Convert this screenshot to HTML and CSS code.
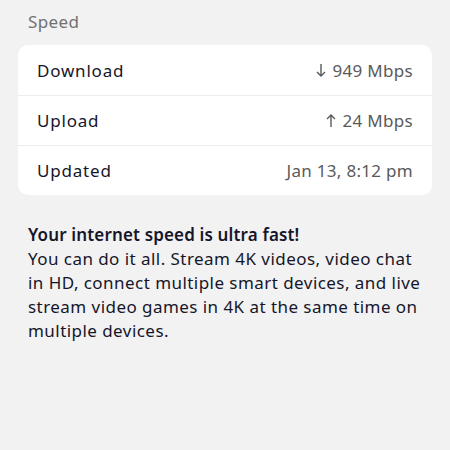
FILE: index.html
```html
<!DOCTYPE html>
<html lang="en">
<head>
  <meta charset="UTF-8">
  <meta name="viewport" content="width=device-width, initial-scale=1.0">
  <title>Speed</title>
  <link rel="stylesheet" href="styles.css">
</head>
<body>
  <div class="page">
    <div class="section-title">Speed</div>
    <div class="card">
      <div class="row">
        <span class="label">Download</span>
        <span class="value">
          <svg class="arrow" viewBox="0 0 10 14"><path d="M5 1V13M1 9L5 13L9 9"/></svg>
          949 Mbps
        </span>
      </div>
      <div class="row">
        <span class="label">Upload</span>
        <span class="value">
          <svg class="arrow" viewBox="0 0 10 14"><path d="M5 13V1M1 5L5 1L9 5"/></svg>
          24 Mbps
        </span>
      </div>
      <div class="row">
        <span class="label">Updated</span>
        <span class="value">Jan 13, 8:12 pm</span>
      </div>
    </div>

    <div class="info">
      <strong>Your internet speed is ultra fast!</strong>
      <p>You can do it all. Stream 4K videos, video chat in HD, connect multiple smart devices, and live stream video games in 4K at the same time on multiple devices.</p>
    </div>
  </div>
</body>
</html>
```

FILE: styles.css
```css
body {
  margin: 0;
  background-color: #f2f2f2;
  font-family: "Noto Sans", sans-serif;
  color: #16162a;
}

.page {
  padding: 10px 18px 0 18px;
}

.section-title {
  padding-left: 10px;
  font-size: 17px;
  letter-spacing: 0.4px;
  line-height: 24px;
  color: #717171;
  margin-bottom: 11px;
}

.card {
  background: white;
  border-radius: 10px;
  display: flex;
  flex-direction: column;
}

.row {
  height: 50px;
  display: flex;
  justify-content: space-between;
  align-items: center;
  padding: 0 19px;
  font-size: 17px;
  letter-spacing: 0.8px;
}

.row + .row {
  border-top: 1px solid #ececec;
  height: 49px;
}

.value {
  display: flex;
  align-items: center;
  gap: 7px;
  color: #5a5a5a;
  letter-spacing: 0.3px;
}

.arrow {
  width: 10px;
  height: 14px;
  fill: none;
  stroke: #5a5a5a;
  stroke-width: 1.4;
}

.info {
  padding: 28px 10px 0 10px;
  font-size: 17px;
  line-height: 24px;
  letter-spacing: 0.45px;
}

.info strong {
  display: block;
  font-weight: 600;
  letter-spacing: 0.15px;
}

.info p {
  margin: 0;
}
```
